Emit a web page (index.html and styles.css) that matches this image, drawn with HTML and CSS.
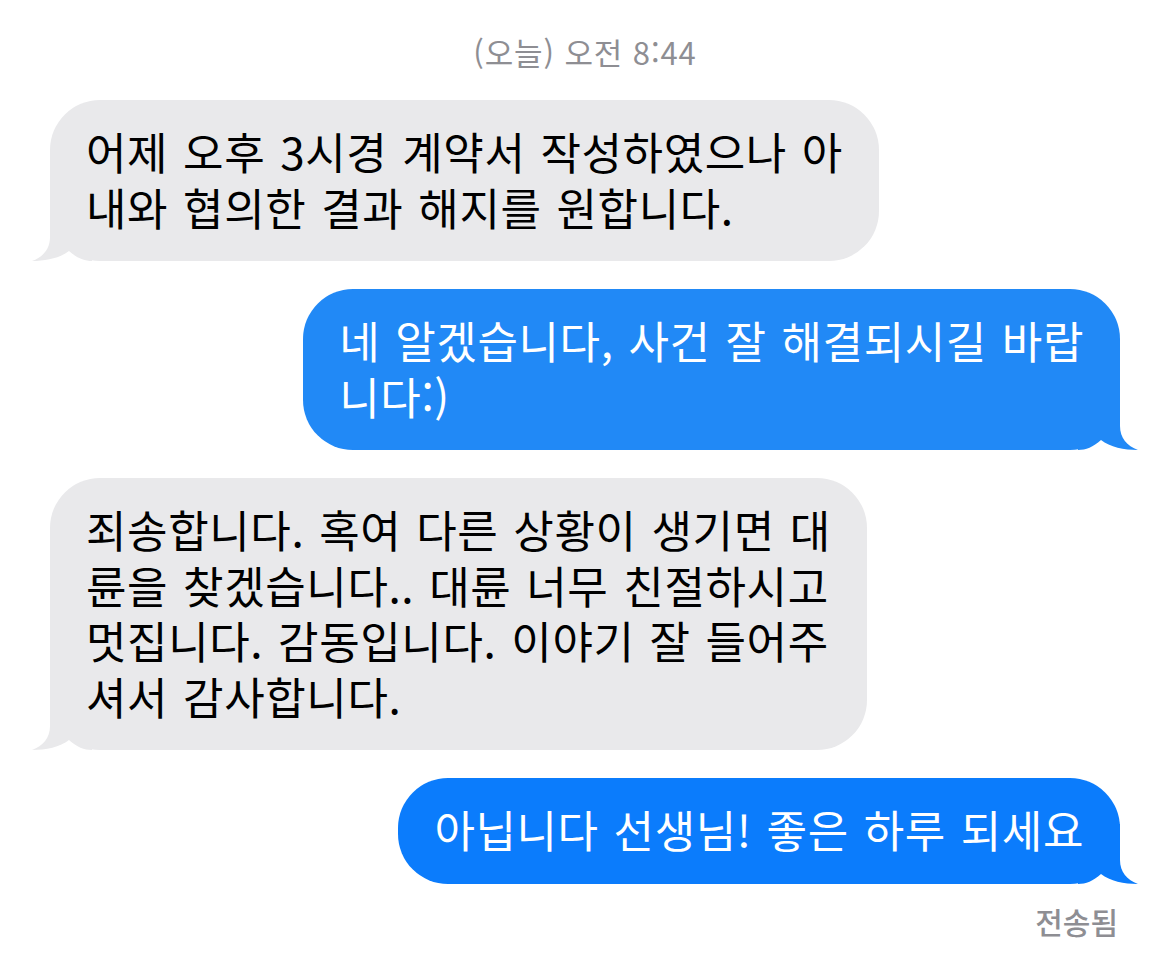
FILE: index.html
```html
<!DOCTYPE html>
<html lang="ko">
<head>
<meta charset="utf-8">
<title>메시지</title>
<link rel="stylesheet" href="styles.css">
</head>
<body>
<main class="thread">
  <div class="stamp">(오늘) 오전 8:44</div>

  <div class="bubble in">
    <p class="text"><span class="line">어제 오후 3시경 계약서 작성하였으나 아</span><span class="line">내와 협의한 결과 해지를 원합니다.</span></p>
    <svg class="tail" viewBox="0 0 60 60" width="60" height="60" aria-hidden="true"><path d="M18 0 L18 36 C18 48 11 56 0 60 C14 60 28 57 37 50 C45 57 52 60 60 60 L60 0 Z"/></svg>
  </div>

  <div class="bubble out out-a">
    <p class="text"><span class="line">네 알겠습니다, 사건 잘 해결되시길 바랍</span><span class="line">니다:)</span></p>
    <svg class="tail" viewBox="0 0 60 60" width="60" height="60" aria-hidden="true"><path d="M18 0 L18 36 C18 48 11 56 0 60 C14 60 28 57 37 50 C45 57 52 60 60 60 L60 0 Z"/></svg>
  </div>

  <div class="bubble in">
    <p class="text"><span class="line">죄송합니다. 혹여 다른 상황이 생기면 대</span><span class="line">륜을 찾겠습니다.. 대륜 너무 친절하시고</span><span class="line">멋집니다. 감동입니다. 이야기 잘 들어주</span><span class="line">셔서 감사합니다.</span></p>
    <svg class="tail" viewBox="0 0 60 60" width="60" height="60" aria-hidden="true"><path d="M18 0 L18 36 C18 48 11 56 0 60 C14 60 28 57 37 50 C45 57 52 60 60 60 L60 0 Z"/></svg>
  </div>

  <div class="bubble out out-b">
    <p class="text"><span class="line">아닙니다 선생님! 좋은 하루 되세요</span></p>
    <svg class="tail" viewBox="0 0 60 60" width="60" height="60" aria-hidden="true"><path d="M18 0 L18 36 C18 48 11 56 0 60 C14 60 28 57 37 50 C45 57 52 60 60 60 L60 0 Z"/></svg>
  </div>

  <div class="status">전송됨</div>
</main>
</body>
</html>
```

FILE: styles.css
```css
html, body {
  margin: 0;
  padding: 0;
  background: #ffffff;
}

body {
  font-family: "Noto Sans CJK KR", "Noto Sans", "Liberation Sans", sans-serif;
  color: #000;
}

.thread {
  display: flex;
  flex-direction: column;
  align-items: flex-start;
  padding: 34px 50px 0 50px;
  gap: 28px;
}

.stamp {
  align-self: center;
  font-size: 31px;
  line-height: 36px;
  color: #8e8e93;
  letter-spacing: 0.9px;
  margin-bottom: 2px;
}

.bubble {
  position: relative;
  padding: 24px 36px 26px;
  border-radius: 50px;
  font-size: 44px;
  line-height: 55.5px;
  letter-spacing: 0.6px;
  word-spacing: 2px;
  white-space: nowrap;
}

.bubble .text {
  position: relative;
  z-index: 1;
  margin: 0;
}

.bubble .line {
  display: block;
  height: 55.5px;
}

.bubble .tail {
  position: absolute;
  bottom: 0;
  left: -18px;
  z-index: 0;
}

.in {
  background: #e9e9eb;
}

.in .tail path {
  fill: #e9e9eb;
}

.out {
  align-self: flex-end;
  color: #fff;
}

.out .tail {
  left: auto;
  right: -18px;
  transform: scaleX(-1);
}

.out-a {
  background: #2189f6;
}

.out-a .tail path {
  fill: #2189f6;
}

.out-b {
  background: #0b7cfc;
}

.out-b .tail path {
  fill: #0b7cfc;
}

.status {
  align-self: flex-end;
  margin-top: -9px;
  margin-right: 2px;
  font-size: 30px;
  line-height: 36px;
  font-weight: 500;
  color: #8e8e93;
}
```
